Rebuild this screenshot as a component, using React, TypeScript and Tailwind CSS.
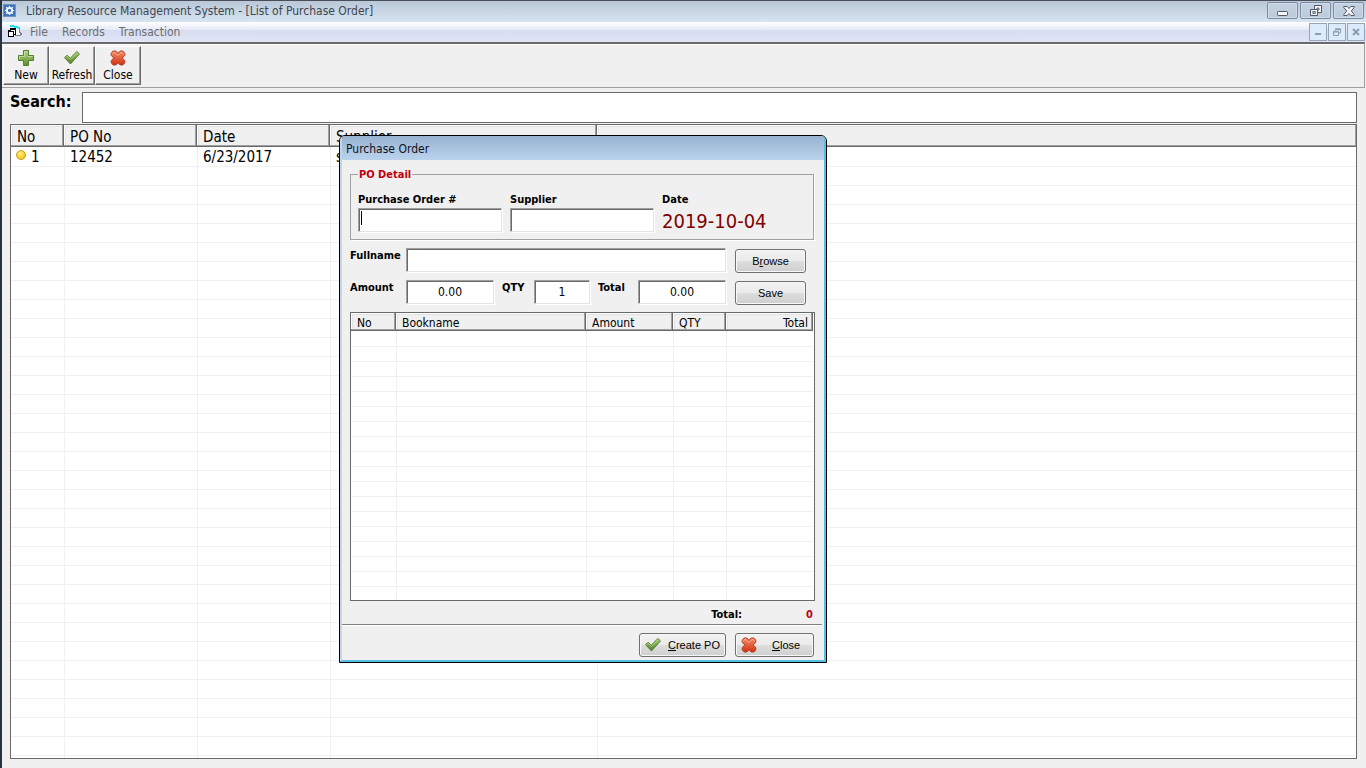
import React, { useState } from 'react';

type Column = { label: string; width?: string; align?: string };

const orderColumns: Column[] = [
  { label: 'No', width: 'w-[53px]' },
  { label: 'PO No', width: 'w-[133px]' },
  { label: 'Date', width: 'w-[133px]' },
  { label: 'Supplier', width: 'w-[267px]' },
  { label: '' },
];

const bookColumns: Column[] = [
  { label: 'No', width: 'w-[45px]' },
  { label: 'Bookname' },
  { label: 'Amount', width: 'w-[87px]' },
  { label: 'QTY', width: 'w-[53px]' },
  { label: 'Total', width: 'w-[87px]', align: 'text-right' },
];

const orders = [{ no: '1', poNo: '12452', date: '6/23/2017', supplier: 's' }];

const PlusIcon = () => (
  <svg viewBox="0 0 16 16" className="w-4 h-4">
    <defs>
      <linearGradient id="plusFill" x1="0" y1="0" x2="0" y2="1">
        <stop offset="0" stopColor="#b3d682" />
        <stop offset="1" stopColor="#5d8f2c" />
      </linearGradient>
    </defs>
    <path d="M5.5 .5h5v5h5v5h-5v5h-5v-5h-5v-5h5z" fill="url(#plusFill)" stroke="#557f30" strokeLinejoin="round" />
    <path d="M6.5 6.500V1.500h3M1.500 9V6.500h5M10 6.500h4.500" fill="none" stroke="#cde5a8" strokeWidth=".8" />
  </svg>
);

const CheckIcon = ({ id }: { id: string }) => (
  <svg viewBox="0 0 16 16" className="w-4 h-4 shrink-0">
    <defs>
      <linearGradient id={id} x1="0" y1="0" x2="0" y2="1">
        <stop offset="0" stopColor="#a9cf7c" />
        <stop offset="1" stopColor="#4c7d22" />
      </linearGradient>
    </defs>
    <path d="M.5 7.700 3 5.200l3.300 3L12.800 1.500l2.700 2.400L6.500 14z" fill={`url(#${id})`} stroke="#5b8439" strokeLinejoin="round" />
    <path d="M2 7.500l1.200-1.200 3.200 3L13 2.900" fill="none" stroke="#cbe4a7" strokeWidth=".6" />
  </svg>
);

const CrossIcon = ({ id }: { id: string }) => (
  <svg viewBox="0 0 16 16" className="w-4 h-4 shrink-0">
    <defs>
      <linearGradient id={id} x1="0" y1="0" x2="0" y2="1">
        <stop offset="0" stopColor="#f58c66" />
        <stop offset="1" stopColor="#cf3315" />
      </linearGradient>
    </defs>
    <path
      d="M3.200 1 5.800 1 8 3.300 10.200 1h2.600l2 2.200v2.200L12.200 8l2.600 2.600v2.200l-2 2.200h-2.600L8 12.700 5.800 15H3.200l-2-2.200v-2.200L3.800 8 1.200 5.400V3.200z"
      fill={`url(#${id})`}
      stroke="#b53a20"
      strokeLinejoin="round"
    />
    <path d="M2.200 4.500 4 2l4 3.500L12 2l1.800 2.200" fill="none" stroke="#fbb497" strokeWidth=".8" />
  </svg>
);

const AppIcon = () => (
  <svg viewBox="0 0 13 13" className="w-[13px] h-[13px]">
    <rect x=".5" y=".5" width="12" height="12" fill="#3f73b8" stroke="#7093c2" />
    <circle cx="6.500" cy="6.500" r="2.600" fill="none" stroke="#fff" strokeWidth="1.800" />
    <path d="M6.500 1.900v1.500M6.500 9.600v1.500M1.900 6.500h1.500M9.600 6.500h1.500M3.200 3.200l1 1M8.800 8.800l1 1M9.800 3.200l-1 1M4.200 8.800l-1 1" stroke="#fff" strokeWidth="1.200" />
  </svg>
);

const FormIcon = () => (
  <svg viewBox="0 0 16 14" className="w-4 h-3.5" shapeRendering="crispEdges">
    <path d="M4 2h9v9H7z" fill="#f4f6f8" />
    <path d="M3 0h4v1h4v1h2v2h-2V3H7V2H3z" fill="#19dfe6" />
    <path d="M12 4h1v3h1v1h1v2h-1v1H8v-1h5V8h-1z" fill="#7b8388" />
    <path d="M3.500 3.500h5v6h-2v2h-5v-6h2z" fill="#fff" stroke="#000" />
    <path d="M3 4h6v1H3zM1 6h6v1H1zM6 7h1v3H6z" fill="#000" />
  </svg>
);

const MinimizeGlyph = () => (
  <svg viewBox="0 0 12 12" className="w-3 h-3">
    <rect x=".5" y="6.500" width="10" height="4" rx=".8" fill="#f5f5f5" stroke="#4f5768" />
  </svg>
);

const RestoreGlyph = () => (
  <svg viewBox="0 0 12 12" className="w-3 h-3">
    <path d="M4.500.5h7v7h-7z" fill="#f5f5f5" stroke="#4f5768" />
    <path d="M7 3h2v2H7z" fill="#b9c8d8" stroke="#4f5768" strokeWidth=".8" />
    <path d="M.5 4.500h7v6h-7z" fill="#f5f5f5" stroke="#4f5768" />
    <path d="M2.800 6.500h2.500v2H2.800z" fill="#b9c8d8" stroke="#4f5768" strokeWidth=".8" />
  </svg>
);

const CloseGlyph = () => (
  <svg viewBox="0 0 12 12" className="w-3 h-3">
    <path d="M.8 1.500h3.400L6 3.500l1.800-2h3.400v1L8.300 6l2.900 3.500v1H7.800L6 8.500l-1.800 2H.8v-1L3.700 6 .8 2.500z" fill="#f5f5f5" stroke="#4f5768" />
  </svg>
);

const MdiMinimizeGlyph = () => (
  <svg viewBox="0 0 8 8" className="w-2 h-2"><path d="M1 5h6v2H1z" fill="#8b9cad" /></svg>
);

const MdiRestoreGlyph = () => (
  <svg viewBox="0 0 8 8" className="w-2 h-2">
    <path d="M2.500 2.500V.8h5v4H6M2.500 1.500h5" fill="none" stroke="#8b9cad" />
    <path d="M.5 3.300h5v4.200h-5zM.5 4h5" fill="none" stroke="#8b9cad" />
  </svg>
);

const MdiCloseGlyph = () => (
  <svg viewBox="0 0 8 8" className="w-2 h-2"><path d="M1 1l6 6M7 1 1 7" stroke="#8b9cad" strokeWidth="2" /></svg>
);

const WindowButton = ({ label, children }: { label: string; children: React.ReactNode }) => (
  <button
    aria-label={label}
    className="w-[31px] h-[17px] flex items-center justify-center rounded-xs border border-[#7b8aa3] bg-linear-to-b from-[#c3d1e0] to-[#bccbdb] shadow-[inset_0_0_0_1px_#d0dce9]"
  >
    {children}
  </button>
);

const MdiButton = ({ label, children }: { label: string; children: React.ReactNode }) => (
  <button aria-label={label} className="w-[18px] h-[18px] flex items-center justify-center border border-[#93a6ba] bg-[#dcebfa]">
    {children}
  </button>
);

const ToolButton = ({ label, children }: { label: string; children: React.ReactNode }) => (
  <button className="w-[46px] h-[39px] pt-[3px] flex flex-col items-center gap-px text-xs leading-4 border border-t-white border-l-white border-r-[#696969] border-b-[#696969] shadow-[inset_-1px_-1px_0_#a0a0a0]">
    {children}
    {label}
  </button>
);

const PushButton = ({ className, children }: { className: string; children: React.ReactNode }) => (
  <button
    className={`flex items-center rounded-[3px] border border-[#707070] bg-[linear-gradient(#f2f2f2_0%,#ebebeb_48%,#dddddd_52%,#cfcfcf_100%)] shadow-[inset_0_0_0_1px_#f8f8f8] font-['Liberation_Sans',sans-serif] text-[11px] ${className}`}
  >
    {children}
  </button>
);

const inputStyle =
  'h-6 border border-t-[#a0a0a0] border-l-[#a0a0a0] border-r-[#e3e3e3] border-b-[#e3e3e3] bg-white shadow-[inset_1px_1px_0_#696969,1px_1px_0_#ffffff] outline-none text-xs';

const HeaderRow = ({ columns, className }: { columns: Column[]; className: string }) => (
  <thead>
    <tr>
      {columns.map((col, idx) => (
        <th
          key={idx}
          className={`${className} ${col.width ?? ''} ${col.align ?? 'text-left'} pt-[3px] pb-0 font-normal bg-[#f0f0f0] border-r border-b border-[#696969] shadow-[inset_-1px_-1px_0_#a0a0a0,inset_1px_1px_0_#ffffff,inset_2px_2px_0_#e3e3e3]`}
        >
          {col.label}
        </th>
      ))}
    </tr>
  </thead>
);

const PurchaseOrderDialog = () => {
  const [amount, setAmount] = useState('0.00');
  const [qty, setQty] = useState('1');
  const [total, setTotal] = useState('0.00');

  return (
    <div
      role="dialog"
      aria-labelledby="dialog-title"
      className="absolute left-[337px] top-[135px] w-[488px] rounded-t-md border border-black bg-[#f0f0f0] overflow-hidden text-[11px]"
    >
      <div className="border-l-2 border-r-2 border-b-2 border-l-[#c3d5e9] border-r-[#55c0e4] border-b-[#55c0e4]">
        <div className="h-6 pl-1 pt-0.5 flex items-center bg-linear-to-b from-[#97b3d1] to-[#bbd3ed]">
          <h2 id="dialog-title" className="text-xs text-[#10131a]">Purchase Order</h2>
        </div>

        <div className="px-2 pt-2">
          {/* PO detail group */}
          <fieldset className="h-[72px] w-[464px] px-[7px] border border-[#a0a0a0] shadow-[1px_1px_0_#ffffff]">
            <legend className="px-px leading-[13px] font-bold text-[#c00010]">PO Detail</legend>
            <div className="flex gap-2 pt-[11px]">
              <div className="w-36 flex flex-col">
                <label htmlFor="po-number" className="font-bold leading-4">Purchase Order #</label>
                <div className="relative flex">
                  <input id="po-number" className={`${inputStyle} w-full px-1 caret-transparent`} />
                  <span className="absolute left-[3px] top-[3px] w-px h-3.5 bg-black" />
                </div>
              </div>
              <div className="w-36 flex flex-col">
                <label htmlFor="po-supplier" className="font-bold leading-4">Supplier</label>
                <input id="po-supplier" className={`${inputStyle} w-full px-1`} />
              </div>
              <div className="flex flex-col">
                <span className="font-bold leading-4">Date</span>
                <span className="text-xl leading-[26px] text-[#800000]">2019-10-04</span>
              </div>
            </div>
          </fieldset>

          {/* Book entry */}
          <div className="mt-2 flex items-start">
            <label htmlFor="fullname" className="w-14 font-bold leading-4">Fullname</label>
            <input id="fullname" className={`${inputStyle} w-80 px-1`} />
            <PushButton className="mt-px h-6 ml-[9px] w-[71px] justify-center">
              <span>B<u>r</u>owse</span>
            </PushButton>
          </div>
          <div className="mt-[7px] flex items-start">
            <label htmlFor="amount" className="w-14 font-bold leading-4">Amount</label>
            <input id="amount" value={amount} onChange={(e) => setAmount(e.target.value)} className={`${inputStyle} w-[88px] text-center`} />
            <label htmlFor="qty" className="w-10 pl-2 font-bold leading-4">QTY</label>
            <input id="qty" value={qty} onChange={(e) => setQty(e.target.value)} className={`${inputStyle} w-14 text-center`} />
            <label htmlFor="total" className="w-12 pl-2 font-bold leading-4">Total</label>
            <input id="total" value={total} onChange={(e) => setTotal(e.target.value)} className={`${inputStyle} w-[88px] text-center`} />
            <PushButton className="mt-px h-6 ml-[9px] w-[71px] justify-center">Save</PushButton>
          </div>

          <div className="mt-[7px] w-[465px] h-[289px] pr-px border border-[#696969] bg-white overflow-hidden">
            <table className="w-full table-fixed border-separate border-spacing-0">
              <HeaderRow columns={bookColumns} className="h-[18px] px-1.5 text-xs leading-[14px] last:pr-1" />
              <tbody>
                {Array.from({ length: 18 }, (_, row) => (
                  <tr key={row} className="h-[15px] first:h-4">
                    {bookColumns.map((_, idx) => (
                      <td key={idx} className="p-0 border-l border-b border-[#f0f0f0] first:border-l-0" />
                    ))}
                  </tr>
                ))}
              </tbody>
            </table>
          </div>

          <div className="w-[463px] pt-1.5 flex justify-end font-bold leading-4">
            <span>Total:</span>
            <span className="w-[71px] text-right text-[#c00010]">0</span>
          </div>
        </div>

        <div className="mr-0.5 mt-px border-t border-[#808080] shadow-[inset_0_1px_0_#ffffff] pl-2 pt-2 pb-[3px] flex">
          <div className="w-[464px] flex justify-end gap-[9px]">
            <PushButton className="h-6 w-[87px] pl-[5px] gap-[7px]">
              <CheckIcon id="createFill" />
              <span><u>C</u>reate PO</span>
            </PushButton>
            <PushButton className="h-6 w-[79px] pl-[5px] gap-[15px]">
              <CrossIcon id="dialogCloseFill" />
              <span><u>C</u>lose</span>
            </PushButton>
          </div>
        </div>
      </div>
    </div>
  );
};

export default function App() {
  const [search, setSearch] = useState('');

  return (
    <div className="relative h-screen flex flex-col overflow-hidden border-l-2 border-[#28323f] bg-[#f0f0f0] text-black font-['DejaVu_Sans_Condensed','Noto_Sans',sans-serif]">
      {/* Title bar */}
      <header className="h-[22px] shrink-0 pl-px pr-0.5 pb-0.5 flex items-center justify-between border-t border-[#4a4f57] bg-linear-to-b from-[#b9c8d8] to-[#d7e4f1]">
        <div className="flex items-center gap-2.5">
          <AppIcon />
          <h1 className="text-xs text-[#40464f]">Library Resource Management System - [List of Purchase Order]</h1>
        </div>
        <div className="flex gap-0.5">
          <WindowButton label="Minimize"><MinimizeGlyph /></WindowButton>
          <WindowButton label="Restore"><RestoreGlyph /></WindowButton>
          <WindowButton label="Close"><CloseGlyph /></WindowButton>
        </div>
      </header>

      {/* Menu bar */}
      <div className="h-5 shrink-0 pl-[5px] pr-px flex items-center justify-between bg-[linear-gradient(#ffffff_0%,#e6eaf6_38%,#d7ddf0_42%,#e0e4f6_100%)]">
        <nav className="flex items-center text-xs text-[#6d6d6d]">
          <FormIcon />
          <button className="ml-[7px]">File</button>
          <button className="ml-3.5">Records</button>
          <button className="ml-3.5">Transaction</button>
        </nav>
        <div className="flex gap-px">
          <MdiButton label="Minimize child"><MdiMinimizeGlyph /></MdiButton>
          <MdiButton label="Restore child"><MdiRestoreGlyph /></MdiButton>
          <MdiButton label="Close child"><MdiCloseGlyph /></MdiButton>
        </div>
      </div>

      {/* Toolbar */}
      <div className="shrink-0 mr-px pl-px pt-0.5 pb-0.5 flex border-t-2 border-t-[#696969] border-r border-b border-r-[#a0a0a0] border-b-[#a0a0a0] shadow-[inset_0_1px_0_#ffffff]">
        <ToolButton label="New"><PlusIcon /></ToolButton>
        <ToolButton label="Refresh"><CheckIcon id="refreshFill" /></ToolButton>
        <ToolButton label="Close"><CrossIcon id="toolCloseFill" /></ToolButton>
      </div>

      <main className="flex-1 min-h-0 flex flex-col gap-px pl-2 pr-[9px] pt-1 pb-[9px]">
        <div className="flex items-start">
          <label htmlFor="search" className="w-[72px] font-bold text-base leading-5">Search:</label>
          <input
            id="search"
            value={search}
            onChange={(e) => setSearch(e.target.value)}
            className="flex-1 h-[31px] px-1 text-base bg-white border border-[#696969] outline-none"
          />
        </div>

        {/* Purchase order list */}
        <div className="flex-1 min-h-0 border border-[#696969] bg-white overflow-hidden">
          <table className="w-full table-fixed border-separate border-spacing-0 text-[15px]">
            <HeaderRow columns={orderColumns} className="h-[22px] px-1.5 leading-[18px] last:border-r-0" />
            <tbody>
              {orders.map((order) => (
                <tr key={order.no} className="h-5 leading-[17px]">
                  <td className="pt-0.5 pb-0 pl-[5px] border-b border-[#f0f0f0]">
                    <div className="flex gap-[5px]">
                      <span className="mt-px w-2.5 h-2.5 rounded-full border border-[#cf9a1c] bg-radial-[at_40%_30%] from-[#fff27a] to-[#f0b400]" />
                      {order.no}
                    </div>
                  </td>
                  <td className="pt-0.5 pb-0 px-[5px] border-l border-b border-[#f0f0f0]">{order.poNo}</td>
                  <td className="pt-0.5 pb-0 px-[5px] border-l border-b border-[#f0f0f0]">{order.date}</td>
                  <td className="pt-0.5 pb-0 px-[5px] border-l border-b border-[#f0f0f0]">{order.supplier}</td>
                  <td className="p-0 border-l border-b border-[#f0f0f0]" />
                </tr>
              ))}
              {Array.from({ length: 32 }, (_, row) => (
                <tr key={row}>
                  {orderColumns.map((_, idx) => (
                    <td key={idx} className="h-[19px] p-0 border-l border-b border-[#f0f0f0] first:border-l-0" />
                  ))}
                </tr>
              ))}
            </tbody>
          </table>
        </div>
      </main>

      <PurchaseOrderDialog />
    </div>
  );
}
